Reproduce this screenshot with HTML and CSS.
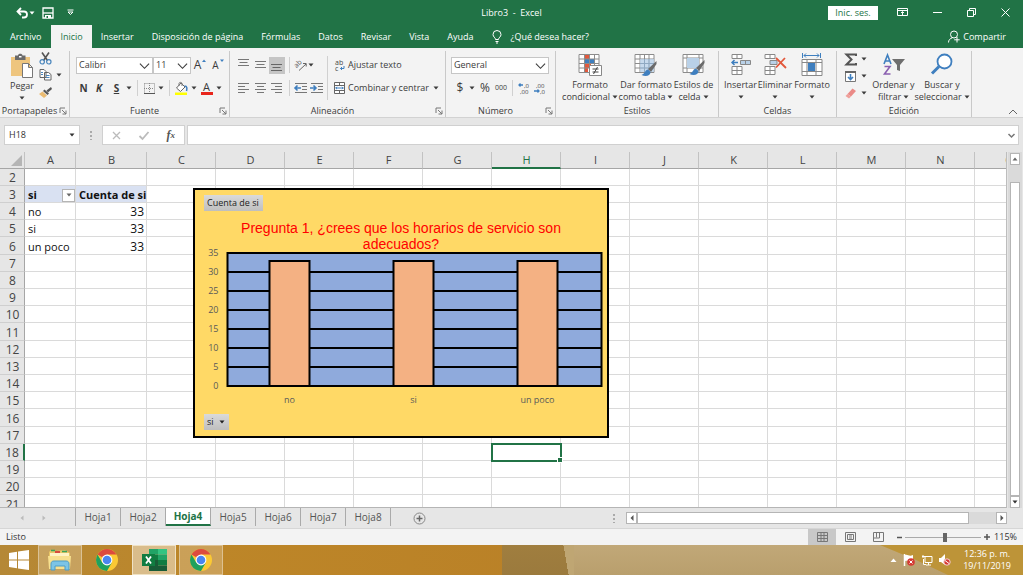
FILE: index.html
```html
<!DOCTYPE html>
<html lang="es">
<head>
<meta charset="utf-8">
<title>Libro3 - Excel</title>
<link rel="stylesheet" href="styles.css">
</head>
<body>
<svg class="defs" aria-hidden="true">
  <symbol id="caret" viewBox="0 0 6 4"><path d="M.5.500h5L3 3.500z" fill="currentColor"/></symbol>
  <symbol id="chev" viewBox="0 0 12 8"><path d="M1 1.500l5 5 5-5" fill="none" stroke="currentColor" stroke-width="1.200"/></symbol>
  <symbol id="launch" viewBox="0 0 8 8"><path d="M1 6V1h5M3 3l4 4M7 3.500V7H3.500" fill="none" stroke="#777"/></symbol>
  <symbol id="table" viewBox="0 0 22 22"><path d="M1 1.500h19v18H1z" fill="#fff"/><path d="M1 1.500h19v18H1zM1 6h19M1 10.500h19M1 15h19M6 1.500v18M10.500 1.500v18M15 1.500v18" fill="none" stroke="#8c8c8c"/></symbol>
  <symbol id="brush" viewBox="0 0 16 16"><path d="M15.500 0L7 8l3 3 5.500-8z" fill="#6b6b6b"/><path d="M7 8.500c-3 0-2.500 4-6.500 5.500 4 2 9 1 9-3z" fill="#3f7fbf"/></symbol>
  <symbol id="chrome" viewBox="0 0 24 24"><circle cx="12" cy="12" r="11" fill="#fbc934"/><path d="M12 12L2.500 6.500A11 11 0 0 1 21.500 6.500H12z" fill="#dd4b3e"/><path d="M2.500 6.500A11 11 0 0 0 12 23l4.700-8.300L12 12 7.300 14.700z" fill="#1fa15d"/><circle cx="12" cy="12" r="5.400" fill="#fff"/><circle cx="12" cy="12" r="4.300" fill="#4a86f0"/></symbol>
</svg>

<header class="top">
  <div class="titlebar">
    <div class="quick">
      <button aria-label="Deshacer"><svg width="13" height="12" viewBox="0 0 13 12"><path d="M5 1L1.500 4.500 5 8M2 4.500h6c4 0 4 6 0 6H6" fill="none" stroke="#fff" stroke-width="1.800"/></svg></button>
      <svg width="6" height="4"><use href="#caret"/></svg>
      <button class="save" aria-label="Guardar"><svg width="12" height="12" viewBox="0 0 12 12"><path d="M1 1h10v10H1z" fill="none" stroke="#fff" stroke-width="1.300"/><path d="M1 6h10" stroke="#fff" stroke-width="1.300"/><path d="M3 8h6v3H3z" fill="#fff"/><path d="M4.500 9h1.500v2H4.500z" fill="#217346"/></svg></button>
      <button aria-label="Personalizar"><svg width="7" height="7" viewBox="0 0 7 7"><path d="M.5 1h6M1 3l2.500 2.500L6 3z" fill="none" stroke="#fff"/></svg></button>
    </div>
    <h1>Libro3&nbsp; -&nbsp; Excel</h1>
    <div class="window-tools">
      <button class="signin">Inic. ses.</button>
      <button aria-label="Opciones de cinta"><svg width="11" height="9" viewBox="0 0 11 9"><path d="M.5.5h10v7H.5zM.5 2.500h10M5.500 7V4M4 5l1.500-1.500L7 5" fill="none" stroke="#fff"/></svg></button>
      <button aria-label="Minimizar"><svg width="9" height="9" viewBox="0 0 9 9"><path d="M0 4.500h9" stroke="#fff"/></svg></button>
      <button aria-label="Restaurar"><svg width="9" height="9" viewBox="0 0 9 9"><path d="M.5 2.500h6v6h-6zM2.500 2V.500h6v6H7" fill="none" stroke="#fff"/></svg></button>
      <button aria-label="Cerrar"><svg width="9" height="9" viewBox="0 0 9 9"><path d="M.5.500l8 8M8.500.500l-8 8" stroke="#fff"/></svg></button>
    </div>
  </div>
  <nav class="tabs">
    <button class="file">Archivo</button>
    <button class="on">Inicio</button>
    <button>Insertar</button>
    <button>Disposición de página</button>
    <button>Fórmulas</button>
    <button>Datos</button>
    <button>Revisar</button>
    <button>Vista</button>
    <button>Ayuda</button>
    <button class="tell"><svg width="10" height="14" viewBox="0 0 10 14"><path d="M3.500 9.500C3.500 7.500 1 7 1 4.500a4 4 0 0 1 8 0C9 7 6.500 7.500 6.500 9.500zM3.500 11.500h3M4 13h2" fill="none" stroke="#fff"/></svg>¿Qué desea hacer?</button>
    <button class="share"><svg width="12" height="13" viewBox="0 0 12 13"><circle cx="6" cy="4.500" r="3.500" fill="none" stroke="#fff"/><path d="M.5 12.500c0-2.500 1.500-4 4-4.800M9 7v5.500M6.200 9.800h5.500" fill="none" stroke="#fff"/></svg>Compartir</button>
  </nav>
</header>

<section class="ribbon" aria-label="Cinta de opciones">
  <div class="group clip">
    <div class="body">
      <button class="big"><svg width="24" height="25" viewBox="0 0 24 25"><path d="M1 4h19v19H1z" fill="#eec57e"/><path d="M5 2.500h3C8 0 12.500 0 12.500 2.500h3V7H5z" fill="#6a6a6a"/><path d="M9 3h2.500v1.500H9z" fill="#fff"/><path d="M12.500 10.500h6l4 4v10h-10zM18.500 10.500v4h4" fill="#fff" stroke="#777"/></svg><span>Pegar</span><svg width="6" height="4"><use href="#caret"/></svg></button>
      <div class="clip-side">
        <button aria-label="Cortar"><svg width="13" height="13" viewBox="0 0 13 13"><path d="M3 .5l5.500 8M10 .500L4.500 8.500" stroke="#555" stroke-width="1.600"/><circle cx="3.200" cy="9.800" r="2.200" fill="none" stroke="#4a86bd" stroke-width="1.200"/><circle cx="9.800" cy="9.800" r="2.200" fill="none" stroke="#4a86bd" stroke-width="1.200"/></svg></button>
        <button aria-label="Copiar"><svg width="13" height="12" viewBox="0 0 13 12"><path d="M1 .5h4l2 2v6H1zM5.500 3.500h4l2.500 2V11H5.500z" fill="#fff" stroke="#666"/><path d="M2 3.500h2M2 5.500h2M7 6.500h3.500M7 8.500h3.500" stroke="#4a86bd"/></svg><svg width="6" height="4"><use href="#caret"/></svg></button>
        <button aria-label="Copiar formato"><svg width="13" height="11" viewBox="0 0 13 11"><path d="M12 0L7.500 3.500 9 5.500 13 2z" fill="#555"/><path d="M5.500 2.500l4.500 4-1.500 1.500-4.500-4z" fill="#555"/><path d="M3.500 4.500l4.500 4L5 11 0 7z" fill="#eabb72"/></svg></button>
      </div>
    </div>
    <footer><span>Portapapeles</span><svg width="8" height="8"><use href="#launch"/></svg></footer>
  </div>

  <div class="group font">
    <div class="body rows">
      <div class="r-font1">
        <span class="sel"><select aria-label="Fuente"><option>Calibri</option></select><svg width="11" height="8"><use href="#chev"/></svg></span>
        <span class="sel"><select aria-label="Tamaño"><option>11</option></select><svg width="11" height="8"><use href="#chev"/></svg></span>
        <button class="aa" aria-label="Aumentar tamaño">A<svg width="4" height="4" viewBox="0 0 4 4"><path d="M0 3l2-2.500L4 3z" fill="#3f7fbf"/></svg></button>
        <button class="aa small" aria-label="Disminuir tamaño">A<svg width="4" height="4" viewBox="0 0 4 4"><path d="M0 .5h4L2 3z" fill="#3f7fbf"/></svg></button>
      </div>
      <div class="r-font2">
        <button><b>N</b></button><button><b><i>K</i></b></button><button><b><u>S</u></b></button><svg width="6" height="4"><use href="#caret"/></svg>
        <i class="sep"></i>
        <button aria-label="Bordes"><svg width="11" height="11" viewBox="0 0 11 11"><path d="M.5.500h10v10M.5.500v10M5.500 0v10M0 5.500h10" fill="none" stroke="#888" stroke-dasharray="1 1"/><path d="M0 10.500h11" stroke="#555"/></svg></button><svg width="6" height="4"><use href="#caret"/></svg>
        <i class="sep"></i>
        <button aria-label="Relleno"><svg width="13" height="13" viewBox="0 0 13 13"><path d="M6 1L1.500 6l4 3.500L10 5z" fill="#fff" stroke="#666"/><path d="M4 4V1.500C4 0 7 0 7 1.500V4" fill="none" stroke="#777"/><path d="M9.500 4c3 0 2.500 3 2 5" fill="none" stroke="#3f7fbf" stroke-width="1.500"/><path d="M0 10.500h12V13H0z" fill="#ff0"/></svg></button><svg width="6" height="4"><use href="#caret"/></svg>
        <button aria-label="Color de fuente" class="fontcolor">A</button><svg width="6" height="4"><use href="#caret"/></svg>
      </div>
    </div>
    <footer><span>Fuente</span><svg width="8" height="8"><use href="#launch"/></svg></footer>
  </div>

  <div class="group align">
    <div class="body">
      <div class="rows left">
        <div class="r-al">
          <button aria-label="Alinear arriba"><svg width="12" height="12" viewBox="0 0 12 12"><path d="M0 .5h11M1.500 3.500h8M0 6.500h11" stroke="#777"/></svg></button>
          <button aria-label="Alinear en medio"><svg width="12" height="12" viewBox="0 0 12 12"><path d="M0 2.500h11M1.500 5.500h8M0 8.500h11" stroke="#777"/></svg></button>
          <button class="pressed" aria-label="Alinear abajo"><svg width="12" height="12" viewBox="0 0 12 12"><path d="M0 5.500h11M1.500 8.500h8M0 11.500h11" stroke="#666"/></svg></button>
          <i class="sep"></i>
          <button aria-label="Orientación"><svg width="13" height="12" viewBox="0 0 13 12"><path d="M5 11.500L12 5M9 4.500h3.200v3" fill="none" stroke="#666"/><text x="4" y="7" text-anchor="middle" transform="rotate(-45 4 5)" class="svg-ab">ab</text></svg></button>
          <svg class="wide" width="6" height="4"><use href="#caret"/></svg>
        </div>
        <div class="r-al">
          <button aria-label="Izquierda"><svg width="12" height="12" viewBox="0 0 12 12"><path d="M0 1.500h11M0 4.500h7M0 7.500h11M0 10.500h7" stroke="#777"/></svg></button>
          <button aria-label="Centro"><svg width="12" height="12" viewBox="0 0 12 12"><path d="M0 1.500h11M2 4.500h7M0 7.500h11M2 10.500h7" stroke="#777"/></svg></button>
          <button aria-label="Derecha"><svg width="12" height="12" viewBox="0 0 12 12"><path d="M0 1.500h11M4 4.500h7M0 7.500h11M4 10.500h7" stroke="#777"/></svg></button>
          <i class="sep"></i>
          <button aria-label="Disminuir sangría"><svg width="13" height="12" viewBox="0 0 13 12"><path d="M1 1.500h12M8 4.500h5M8 7.500h5M1 10.500h12" stroke="#777"/><path d="M7 6H1M3.500 3.500L1 6l2.500 2.500" fill="none" stroke="#3f7fbf" stroke-width="1.600"/></svg></button>
          <i></i>
          <button aria-label="Aumentar sangría"><svg width="13" height="12" viewBox="0 0 13 12"><path d="M1 1.500h12M8 4.500h5M8 7.500h5M1 10.500h12" stroke="#777"/><path d="M0 6h6M3.500 3.500L6 6 3.500 8.500" fill="none" stroke="#3f7fbf" stroke-width="1.600"/></svg></button>
        </div>
      </div>
      <i class="sep tall"></i>
      <div class="rows right">
        <div><button class="txt"><svg width="12" height="13" viewBox="0 0 12 13"><text x="1" y="6" class="svg-abc">ab</text><text x="1" y="12" class="svg-abc">c</text><path d="M10 7v2.500H6.500M8 8L6.500 9.500 8 11" fill="none" stroke="#3f7fbf"/></svg>Ajustar texto</button></div>
        <div><button class="txt"><svg width="12" height="12" viewBox="0 0 12 12"><path d="M.5.500h10v11H.500zM.5 3.500h10M.5 8.500h10M5.500 0v3M5.500 9v3" fill="#fff" stroke="#666"/><path d="M1.500 6h8M3 4.800L1.800 6 3 7.200M8 4.800L9.200 6 8 7.200" fill="none" stroke="#3f7fbf"/></svg>Combinar y centrar</button><svg width="6" height="4"><use href="#caret"/></svg></div>
      </div>
    </div>
    <footer><span>Alineación</span><svg width="8" height="8"><use href="#launch"/></svg></footer>
  </div>

  <div class="group num">
    <div class="body rows">
      <div><span class="sel full"><select aria-label="Formato de número"><option>General</option></select><svg width="11" height="8"><use href="#chev"/></svg></span></div>
      <div class="r-num">
        <button class="money">$</button><svg width="6" height="4"><use href="#caret"/></svg><button class="money">%</button><button class="zeros">000</button>
        <i class="sep"></i>
        <button aria-label="Aumentar decimales"><svg width="13" height="13" viewBox="0 0 13 13"><path d="M5 3H1M2.500 1.500L1 3l1.500 1.500" fill="none" stroke="#3f7fbf" stroke-width="1.300"/><text x="6" y="6" class="svg-dec">,0</text><text x="2" y="12" class="svg-dec">,00</text></svg></button>
        <button aria-label="Disminuir decimales"><svg width="13" height="13" viewBox="0 0 13 13"><path d="M0 9h5M3.500 7.500L5 9l-1.500 1.500" fill="none" stroke="#3f7fbf" stroke-width="1.300"/><text x="2" y="6" class="svg-dec">,00</text><text x="6" y="12" class="svg-dec">,0</text></svg></button>
      </div>
    </div>
    <footer><span>Número</span><svg width="8" height="8"><use href="#launch"/></svg></footer>
  </div>

  <div class="group styles">
    <div class="body">
      <button class="big"><svg width="24" height="24" viewBox="0 0 24 24"><path d="M1 1.500h20v18H1z" fill="#fff"/><path d="M7 1.500h4v4.500H7zM7 10.500h6V15H7zM7 15h3v4.500H7z" fill="#e2583c"/><path d="M7 6h9v4.500H7z" fill="#3f7fbf"/><path d="M1 1.500h20v18H1zM1 6h20M1 10.500h20M1 15h20M6.500 1.500v18M11.500 1.500v18M16.500 1.500v18" fill="none" stroke="#8c8c8c"/><path d="M11.500 12.500h12v10h-12z" fill="#fff" stroke="#888"/><path d="M14.500 16h6M14.500 19h6M19.500 14l-4 7" stroke="#444"/></svg><span>Formato</span><span>condicional<svg width="6" height="4"><use href="#caret"/></svg></span></button>
      <button class="big"><svg width="24" height="24" viewBox="0 0 24 24"><use href="#table" width="22" height="22"/><path d="M6 6h14v13H6z" fill="#b9d1e8" opacity=".8"/><path d="M6 10.500h14M6 15h14M10.500 6v13M15 6v13" stroke="#8fa9c2"/><use href="#brush" x="7" y="8" width="16" height="16"/></svg><span>Dar formato</span><span>como tabla<svg width="6" height="4"><use href="#caret"/></svg></span></button>
      <button class="big"><svg width="24" height="24" viewBox="0 0 24 24"><path d="M1 1.500h20v18H1zM1 5h20M1 15h20M5 1.500v18M17 1.500v18" fill="#fff" stroke="#8c8c8c"/><path d="M5 5h12v10H5z" fill="#b9d1e8"/><use href="#brush" x="7" y="7" width="16" height="16"/></svg><span>Estilos de</span><span>celda<svg width="6" height="4"><use href="#caret"/></svg></span></button>
    </div>
    <footer><span>Estilos</span></footer>
  </div>

  <div class="group cells">
    <div class="body">
      <button class="big"><svg width="24" height="24" viewBox="0 0 24 24"><path d="M3 1.500h10v4H3zM8 1.500v4M3 13.500h10v8H3zM8 13.500v8M3 17.500h10" fill="#fff" stroke="#888"/><path d="M11.500 7.500h10v4h-10zM16.500 7.500v4" fill="#b9d1e8" stroke="#888"/><path d="M9 9.500H3M5.500 7L3 9.500 5.500 12" fill="none" stroke="#3f7fbf" stroke-width="1.500"/></svg><span>Insertar</span><svg width="6" height="4"><use href="#caret"/></svg></button>
      <button class="big"><svg width="24" height="24" viewBox="0 0 24 24"><path d="M2 1.500h10v4H2zM7 1.500v4M2 13.500h10v8H2zM7 13.500v8M2 17.500h10" fill="#fff" stroke="#888"/><path d="M7 7.500h7v4H7z" fill="#b9d1e8" stroke="#888"/><path d="M13 5l10 10M22 5L13 14.500" stroke="#e2583c" stroke-width="1.800"/></svg><span>Eliminar</span><svg width="6" height="4"><use href="#caret"/></svg></button>
      <button class="big"><svg width="24" height="24" viewBox="0 0 24 24"><path d="M2.500 0v5M20.500 0v5M4 2.500h15M6 .5l-2 2 2 2M17 .5l2 2-2 2" fill="none" stroke="#3f7fbf"/><path d="M2 6.500h20v16H2zM2 9.500h20M2 18.500h20M7 6.500v16M16 6.500v16" fill="#fff" stroke="#888"/><path d="M8 10h7v8H8z" fill="#3f7fbf"/></svg><span>Formato</span><svg width="6" height="4"><use href="#caret"/></svg></button>
    </div>
    <footer><span>Celdas</span></footer>
  </div>

  <div class="group edit">
    <div class="body">
      <div class="edit-side">
        <button aria-label="Autosuma"><svg width="12" height="13" viewBox="0 0 12 13"><path d="M11 3V1.500H1.500l5 5-5 5H11V10" fill="none" stroke="#555" stroke-width="2"/></svg><svg width="6" height="4"><use href="#caret"/></svg></button>
        <button aria-label="Rellenar"><svg width="12" height="13" viewBox="0 0 12 13"><path d="M.5 1.500h10v10H.5z" fill="#fff" stroke="#777"/><path d="M0 2h11" stroke="#666" stroke-width="2"/><path d="M5.500 4v5.500M3 7l2.500 2.500L8 7" fill="none" stroke="#3f7fbf" stroke-width="1.600"/></svg><svg width="6" height="4"><use href="#caret"/></svg></button>
        <button aria-label="Borrar"><svg width="12" height="11" viewBox="0 0 12 11"><path d="M7.500.5L11 3 6 8.500 2.500 6z" fill="#ea8a87"/><path d="M2.500 6L6 8.500 4 10.500 .5 8z" fill="#ef9f9a"/></svg><svg width="6" height="4"><use href="#caret"/></svg></button>
      </div>
      <button class="big"><svg width="24" height="24" viewBox="0 0 24 24"><path d="M2 11l3.500-9L9 11M3.200 8h4.600" fill="none" stroke="#3f7fbf" stroke-width="1.600"/><path d="M2.500 13.500H8l-5.500 7.500h6" fill="none" stroke="#8a5fb0" stroke-width="1.600"/><path d="M10 6h13l-5 6v6l-3-1v-5z" fill="#6e6e6e"/></svg><span>Ordenar y</span><span>filtrar<svg width="6" height="4"><use href="#caret"/></svg></span></button>
      <button class="big"><svg width="24" height="24" viewBox="0 0 24 24"><circle cx="14.500" cy="8.500" r="7" fill="#fff" stroke="#3f7fbf" stroke-width="1.800"/><path d="M9 13.500l-7 7" stroke="#3f7fbf" stroke-width="3"/></svg><span>Buscar y</span><span>seleccionar<svg width="6" height="4"><use href="#caret"/></svg></span></button>
    </div>
    <footer><span>Edición</span></footer>
  </div>
  <button class="collapse" aria-label="Contraer"><svg width="10" height="6" viewBox="0 0 10 6"><path d="M1 5l4-4 4 4" fill="none" stroke="#666"/></svg></button>
</section>

<section class="formula">
  <div class="namebox"><input aria-label="Cuadro de nombres" value="H18"><svg width="6" height="4"><use href="#caret"/></svg></div>
  <i class="dots"></i>
  <div class="fx">
    <button aria-label="Cancelar"><svg width="9" height="9" viewBox="0 0 9 9"><path d="M1 1l7 7M8 1L1 8" stroke="#bbb" stroke-width="1.300"/></svg></button>
    <button aria-label="Introducir"><svg width="10" height="9" viewBox="0 0 10 9"><path d="M.5 5L3.500 8l6-7" fill="none" stroke="#bbb" stroke-width="1.800"/></svg></button>
    <button class="fn">f<small>x</small></button>
  </div>
  <div class="entry"><input aria-label="Barra de fórmulas"><svg width="7" height="5" viewBox="0 0 7 5"><path d="M.5 1l3 3 3-3" fill="none" stroke="#777" stroke-width="1.500"/></svg></div>
</section>

<main class="sheet">
  <div class="grid">
    <table id="cells"></table>
    <section class="chart">
      <button class="field">Cuenta de si</button>
      <h2>Pregunta 1, ¿crees que los horarios de servicio son adecuados?</h2>
      <svg class="plot" viewBox="0 0 411 158" role="img" aria-label="Gráfico de columnas" id="plot"></svg>
      <button class="field">si <svg width="6" height="4"><use href="#caret"/></svg></button>
    </section>
  </div>
  <div class="vscroll"><button aria-label="Subir"><svg width="6" height="4" viewBox="0 0 6 4"><path d="M3 .5L5.500 3.500H.5z" fill="#666"/></svg></button><div class="thumb"></div><button aria-label="Bajar"><svg width="6" height="4"><use href="#caret"/></svg></button></div>
</main>

<div class="sheetbar">
  <div class="nav"><button aria-label="Anterior"><svg width="4" height="6" viewBox="0 0 4 6"><path d="M3.500.500v5L.5 3z" fill="#bbb"/></svg></button><button aria-label="Siguiente"><svg width="4" height="6" viewBox="0 0 4 6"><path d="M.5.500v5L3.500 3z" fill="#bbb"/></svg></button></div>
  <div class="sheets"><button>Hoja1</button><button>Hoja2</button><button class="on">Hoja4</button><button>Hoja5</button><button>Hoja6</button><button>Hoja7</button><button>Hoja8</button></div>
  <button class="add" aria-label="Hoja nueva"><svg width="13" height="13" viewBox="0 0 13 13"><circle cx="6.500" cy="6.500" r="5.500" fill="none" stroke="#888"/><path d="M6.500 3.500v6M3.500 6.500h6" stroke="#666" stroke-width="1.500"/></svg></button>
  <i class="dots"></i>
  <div class="hscroll"><button aria-label="Izquierda"><svg width="4" height="6" viewBox="0 0 4 6"><path d="M3.500 0v6L.5 3z" fill="#555"/></svg></button><div class="thumb"></div><button aria-label="Derecha"><svg width="4" height="6" viewBox="0 0 4 6"><path d="M.5 0v6L3.500 3z" fill="#555"/></svg></button></div>
</div>

<div class="status">
  <span class="ready">Listo</span>
  <div class="views">
    <button class="on" aria-label="Normal"><svg width="11" height="10" viewBox="0 0 11 10"><path d="M.5.500h10v9H.500zM.5 3.500h10M.5 6.500h10M4 0v9M7 0v9" fill="none" stroke="#777"/></svg></button>
    <button aria-label="Diseño de página"><svg width="11" height="10" viewBox="0 0 11 10"><path d="M.5.500h10v9H.500zM2.500 2.500h6v5h-6zM4 4h3M4 6h3" fill="none" stroke="#777"/></svg></button>
    <button aria-label="Saltos de página"><svg width="11" height="10" viewBox="0 0 11 10"><path d="M.5.500h10v9H.500zM.5 6h6V.5M3.500 0v5.500" fill="none" stroke="#777"/></svg></button>
  </div>
  <button aria-label="Alejar"><svg width="5" height="7" viewBox="0 0 5 7"><path d="M0 3.500h5" stroke="#555" stroke-width="1.500"/></svg></button>
  <input type="range" aria-label="Zoom" min="0" max="100" value="53">
  <button aria-label="Acercar"><svg width="6" height="6" viewBox="0 0 6 6"><path d="M3 0v6M0 3h6" stroke="#555" stroke-width="1.500"/></svg></button>
  <span class="pct">115%</span>
</div>

<div class="taskbar">
  <button class="start" aria-label="Inicio"><svg width="20" height="20" viewBox="0 0 20 20"><path d="M0 3l8-1.200V9.500H0zM9 1.600L20 0v9.500H9zM0 10.500h8v7.700L0 17zM9 10.500h11V20L9 18.400z" fill="#fff"/></svg></button>
  <button class="task open" aria-label="Explorador"><svg width="26" height="24" viewBox="0 0 26 24"><path d="M2 4l2-2 5 1 9-1 5 3v15H2z" fill="#e9c766"/><path d="M4 2.500h4M15 3.500h5" stroke="#3aa35b" stroke-width="1.500"/><path d="M8 4h5" stroke="#d64b3d" stroke-width="2"/><path d="M3 5h19v5H3z" fill="#fff3c4"/><path d="M1 8h23l-1 13H2z" fill="#f8e08e"/><path d="M4 22v-6c0-2 1-3 3-3h12c2 0 3 1 3 3v6h-4v-4H8v4z" fill="#7cc4e6" stroke="#4d9cc6"/></svg></button>
  <button class="task" aria-label="Chrome"><svg width="24" height="24"><use href="#chrome"/></svg></button>
  <button class="task open active" aria-label="Excel"><svg width="25" height="22" viewBox="0 0 25 22"><path d="M7 0h9v5.500H7z" fill="#21a366"/><path d="M16 0h9v5.500h-9z" fill="#33c481"/><path d="M7 5.500h9V11H7z" fill="#107c41"/><path d="M16 5.500h9V11h-9z" fill="#21a366"/><path d="M7 11h9v11H7z" fill="#185c37"/><path d="M16 11h9v5.500h-9z" fill="#107c41"/><path d="M16 16.500h9V22h-9z" fill="#185c37"/><path d="M0 5h13v12H0z" fill="#107c41"/><path d="M4 7.500l5 7M9 7.500l-5 7" stroke="#fff" stroke-width="1.800"/></svg></button>
  <button class="task open" aria-label="Chrome"><svg width="24" height="24"><use href="#chrome"/></svg></button>
  <div class="tray">
    <svg width="7" height="5" viewBox="0 0 7 5"><path d="M3.500.5L6.500 4H.5z" fill="#fff"/></svg>
    <svg width="12" height="12" viewBox="0 0 12 12"><path d="M1.500 0v12" stroke="#fff" stroke-width="1.500"/><path d="M2 1c3-1 4 2 8 0v6c-4 1-5-1-8 0z" fill="#fff"/><circle cx="8" cy="8" r="3.800" fill="#d63a34"/><path d="M6.500 6.500l3 3M9.500 6.500l-3 3" stroke="#fff"/></svg>
    <svg width="12" height="12" viewBox="0 0 12 12"><path d="M4 2.500h7v6H4zM5 11h5M7.500 8.500V11M2 1v3M1 2.500h3M2.500 5v5.500H5" fill="none" stroke="#fff"/></svg>
    <svg width="12" height="12" viewBox="0 0 12 12"><path d="M0 4h2l4-4v11L2 8H0z" fill="#fff"/><circle cx="8" cy="8" r="3.200" fill="#d63a34" stroke="#f3d4d0"/><path d="M6 6.500l4 3" stroke="#fff"/></svg>
    <div class="clock"><span>12:36 p. m.</span><span>19/11/2019</span></div>
  </div>
</div>
<script src="script.js"></script>
</body>
</html>
```

FILE: styles.css
```css
* { box-sizing: border-box; }
body {
  margin: 0; height: 100vh; display: flex; flex-direction: column; overflow: hidden;
  font: 9px/12px "Open Sans", "Noto Sans", sans-serif; color: #333; background: #e6e6e6;
}
button, input, select { font: inherit; color: inherit; border: 0; background: none; padding: 0; margin: 0; }
button { display: flex; align-items: center; justify-content: center; white-space: nowrap; }
svg { flex: none; display: block; overflow: visible; }
.defs { position: absolute; width: 0; height: 0; }
h1, h2 { margin: 0; font-weight: 400; font-size: 9px; }

.top { background: #217346; color: #fff; }
.titlebar { display: grid; grid-template-columns: 1fr auto 1fr; align-items: center; height: 25px; }
.quick { display: flex; align-items: center; padding-left: 16px; }
.save { margin: 0 13px 0 7px; }
.window-tools { display: flex; justify-content: flex-end; align-items: center; gap: 25px; padding-right: 13px; }
.signin { background: #fff; color: #217346; width: 50px; height: 14px; margin-right: -6px; }
.tabs { display: flex; height: 23px; }
.tabs button { padding: 0 9px; }
.tabs .file { padding: 0 10px; }
.tabs .on { background: #f3f3f3; color: #217346; }
.tabs .tell { gap: 9px; }
.tabs .share { margin-left: auto; gap: 3px; padding-right: 17px; }

.ribbon { display: flex; height: 70px; background: #f3f3f3; border-bottom: 1px solid #d2d2d2; }
.group { display: flex; flex-direction: column; flex: none; border-right: 1px solid #c9c9c9; margin-top: 3px; color: #3b3b3b; }
.body { display: flex; flex: none; height: 54px; }
.group footer { display: flex; align-items: center; height: 12px; }
.group footer span { flex: 1; text-align: center; }
.group footer svg { margin-right: 2px; }
.clip { width: 70px; } .font { width: 160px; } .align { width: 216px; } .num { width: 110px; }
.styles { width: 163px; } .cells { width: 118px; } .edit { width: 135px; }
.big { flex-direction: column; justify-content: flex-start; padding-top: 2px; }
.big > svg:first-child { margin-bottom: 2px; }
.big span { display: flex; align-items: center; gap: 2px; }
.big > svg:last-child { margin-top: 4px; }
.clip .big { padding-left: 10px; }
.clip-side { display: grid; grid-template-rows: 14px 20px 14px; padding-left: 5px; }
.clip-side button { justify-content: flex-start; gap: 4px; }
.rows { display: grid; grid-template-rows: 24px 22px; padding: 2px 6px 0; align-content: start; }
.rows > div { display: flex; align-items: center; }
.sel { position: relative; display: block; height: 17px; background: #fff; border: 1px solid #c6c6c6; }
.sel select { appearance: none; width: 100%; height: 15px; padding-left: 2px; display: block; }
.sel svg { position: absolute; right: 2px; top: 4px; pointer-events: none; }
.full { width: 98px; }
.rows > .r-font1 { display: grid; grid-template-columns: 77px 38px 18px 18px; }
.aa { font-size: 12px; gap: 1px; align-items: flex-start; }
.small { font-size: 10px; }
.rows > .r-font2 { display: grid; grid-template-columns: 15px 16px 19px 6px 11px 12px 12px 5px 19px 6px 19px 6px; justify-items: center; font-size: 10px; }
.fontcolor { border-bottom: 3px solid #e8251b; width: 12px; height: 13px; font-size: 11px; line-height: 10px; }
.sep { width: 1px; height: 16px; background: #d0d0d0; justify-self: center; }
.tall { height: 44px; margin: 5px 3px 0 4px; }
.left { padding-right: 0; }
.rows > .r-al { display: grid; grid-template-columns: 16px 17px 16px 9px 13px 3px 13px; justify-items: center; }
.r-al .wide { grid-column: span 2; justify-self: start; margin-left: 1px; }
.pressed { background: #c5c5c5; width: 16px; height: 17px; }
.right { padding-left: 3px; padding-right: 0; }
.txt { gap: 2px; margin-right: 4px; }
.svg-ab { font-size: 7px; fill: #555; }
.svg-abc { font-size: 7px; fill: #444; }
.svg-dec { font-size: 6px; fill: #444; }
.num .rows { padding-left: 5px; }
.rows > .r-num { display: grid; grid-template-columns: 18px 6px 20px 12px 10px 14px 18px; justify-items: center; }
.money { font-size: 12px; }
.zeros { font-size: 7px; }
.styles .body { display: grid; grid-template-columns: 60px 52px 43px; padding-left: 4px; }
.cells .body { display: grid; grid-template-columns: 35px 34px 40px; padding-left: 4px; }
.edit .body { display: grid; grid-template-columns: 27px 43px 54px; padding-left: 8px; }
.edit-side { display: grid; grid-template-rows: 16px 18px 16px; }
.edit-side button { gap: 4px; justify-content: flex-start; }
.collapse { margin: auto 5px 2px auto; }

.formula { display: flex; align-items: center; height: 34px; padding: 0 4px; }
.namebox, .fx, .entry { display: flex; align-items: center; height: 20px; background: #fff; border: 1px solid #d0d0d0; }
.namebox { width: 76px; padding: 0 4px; }
.namebox input { width: 100%; min-width: 0; }
.dots { width: 2px; height: 9px; margin: 0 10px; background: repeating-linear-gradient(#aaa 0 2px, transparent 2px 4px); }
.fx { width: 83px; justify-content: space-around; }
.fn { font: italic bold 12px "Liberation Serif", serif; color: #555; }
.fn small { font-size: 9px; }
.entry { flex: 1; margin-left: 2px; padding-right: 3px; }
.entry input { flex: 1; }

.sheet { flex: 1; min-height: 0; display: flex; }
.grid { position: relative; flex: 1; overflow: hidden; background: #fff; border-bottom: 1px solid #b5b5b5; border-right: 1px solid #bdbdbd; }
table { table-layout: fixed; border-collapse: separate; border-spacing: 0; width: 1044px; font-size: 11px; line-height: 14px; color: #111; }
tr { height: 17px; }
tr:nth-child(5n) { height: 18px; }
th, td { padding: 2px 2px 0 3px; border-right: 1px solid #dadada; border-bottom: 1px solid #dadada; white-space: nowrap; }
thead th { background: #e6e6e6; border-bottom-color: #a6a6a6; border-right-color: #c2c2c2; font-weight: 400; padding-top: 0; color: #444; }
tbody th { background: #e6e6e6; border-right-color: #a6a6a6; border-bottom-color: #cfcfcf; font-weight: 400; font-size: 12px; color: #444; }
thead .cur { border-bottom: 2px solid #217346; color: #217346; }
tbody .cur { border-right: 2px solid #217346; }
td.n { text-align: right; font-size: 12px; }
td.head { background: #d9e1f2; font-weight: 700; padding-right: 0; }
td.head div { display: flex; justify-content: space-between; align-items: center; }
.corner svg { margin-left: auto; }
.drop { width: 13px; height: 13px; background: #fff; border: 1px solid #b5b5b5; color: #666; }
.pick { outline: 2px solid #217346; outline-offset: -1px; position: relative; }
.pick::after { content: ""; position: absolute; right: -3px; bottom: -3px; width: 4px; height: 4px; background: #217346; border: 1px solid #fff; box-sizing: content-box; }
.chart { position: absolute; left: 193px; top: 36px; width: 416px; height: 250px; background: #ffd966; border: 2px solid #000; padding: 5px 0 0; display: flex; flex-direction: column; align-items: flex-start; }
.chart h2 { font: 14px/16px "Liberation Sans", Arial, sans-serif; color: #f00; text-align: center; width: 330px; margin: 9px auto 0; }
.field { background: linear-gradient(#dadada, #bfbfbf); height: 16px; margin-left: 9px; padding: 0 4px 0 3px; gap: 5px; color: #222; }
.plot { width: 100%; height: 158px; margin: 0 0 4px; }
.plot text { font-size: 9px; fill: #595959; }
.vscroll { width: 16px; padding: 1px 2px 0; display: flex; flex-direction: column; background: #dadada; border: solid #e6e6e6; border-width: 0 1px; }
.vscroll button { height: 12px; background: #fff; border: 1px solid #b5b5b5; }
.vscroll .thumb { flex: 1; margin-top: 17px; background: #fff; border: 1px solid #b5b5b5; }

.sheetbar { display: flex; align-items: center; height: 21px; color: #555; border-bottom: 1px solid #d6d6d6; }
.nav { display: flex; gap: 18px; width: 75px; padding-left: 20px; }
.sheets { display: flex; height: 18px; align-self: flex-start; border-left: 1px solid #aaa; }
.sheets button { width: 45px; border-right: 1px solid #aaa; font-size: 10px; }
.sheets .on { background: #fff; color: #217346; font-weight: 700; border-bottom: 2px solid #217346; }
.add { margin-left: 22px; }
.sheetbar .dots { margin-left: auto; margin-right: 11px; }
.hscroll { display: flex; width: 381px; height: 12px; margin-right: 16px; background: #dadada; }
.hscroll button { width: 11px; background: #fff; border: 1px solid #b5b5b5; }
.hscroll .thumb { flex: 1; margin-right: 27px; background: #fff; border: 1px solid #b5b5b5; }

.status { display: flex; align-items: center; height: 16px; background: #f3f3f3; padding: 0 6px; }
.ready { flex: 1; }
.views { display: flex; align-self: stretch; margin-right: 5px; }
.views button { width: 28px; }
.views .on { background: #c8c8c8; }
.status input { appearance: none; width: 76px; height: 10px; margin: 0 3px; background: linear-gradient(#aaa, #aaa) center / 100% 1px no-repeat; }
.status input::-webkit-slider-thumb { appearance: none; width: 4px; height: 9px; background: #666; }
.pct { margin-left: 4px; }

.taskbar {
  position: relative; display: flex; height: 30px; color: #fff;
  background:
    linear-gradient(80deg, transparent 50%, #bfa673 50%) 558px 0 / 16px 100% no-repeat,
    linear-gradient(#c1a878, #b99f6d) 574px 0 / 100% 100% no-repeat,
    linear-gradient(#a07e3f, #9b7a3d) 502px 0 / 72px 100% no-repeat,
    linear-gradient(90deg, #b58836, #bd8628 20%, #b98027 60%, #b17126);
}
.taskbar::before {
  content: ""; position: absolute; inset: 0 0 0 auto; width: 143px;
  background: linear-gradient(204deg, #bd9438 70%, #bd9020 85%);
  clip-path: polygon(0 0, 100% 0, 100% 100%, 68px 100%, 36px 50%);
}
.start { width: 38px; }
.task { width: 44px; margin-right: 3px; border: 1px solid transparent; }
.task.open { background: rgba(255, 255, 255, .22); border-color: rgba(255, 255, 255, .35); }
.task.open.active { background: rgba(255, 255, 255, .45); border-color: #f0e2c4; }
.tray { position: relative; display: flex; align-items: center; gap: 6px; margin-left: auto; padding-right: 12px; }
.clock { display: flex; flex-direction: column; align-items: center; margin-left: 6px; }
```

FILE: script.js
```js
const letters = "ABCDEFGHIJKLMNO".split("");
const widths = [25, 51, 71].concat(Array(13).fill(69));
const data = {
  B3: "Cuenta de si", A4: "no", A5: "si", A6: "un poco", B4: "33", B5: "33", B6: "33"
};
const caret = '<svg width="6" height="4"><use href="#caret"/></svg>';

function cell(id) {
  if (id === "A3") return `<td class="head"><div>si<button class="drop" aria-label="Filtrar">${caret}</button></div></td>`;
  const cls = id === "B3" ? "head" : id === "H18" ? "pick" : /^B/.test(id) && data[id] ? "n" : "";
  return `<td${cls ? ` class="${cls}"` : ""}>${data[id] || ""}</td>`;
}

let html = "<colgroup>" + widths.map(w => `<col style="width:${w}px">`).join("") + "</colgroup>";
html += '<thead><tr><th class="corner"><svg width="11" height="11" viewBox="0 0 11 11"><path d="M11 0v11H0z" fill="#b5b5b5"/></svg></th>';
html += letters.map(l => `<th${l === "H" ? ' class="cur"' : ""}>${l}</th>`).join("") + "</tr></thead><tbody>";
for (let r = 2; r <= 21; r++) {
  html += `<tr><th${r === 18 ? ' class="cur"' : ""}>${r}</th>` + letters.map(l => cell(l + r)).join("") + "</tr>";
}
document.getElementById("cells").innerHTML = html + "</tbody>";

const bottom = 134, step = 19, left = 32, width = 374;
let plot = `<rect x="${left}" y="1" width="${width}" height="133" fill="#8faadc" stroke="#000" stroke-width="2"/>`;
for (let i = 0; i <= 7; i++) {
  const y = bottom - i * step;
  if (i) plot += `<path d="M${left} ${y}h${width}" stroke="#000" stroke-width="2"/>`;
  plot += `<text x="23" y="${y + 3}" text-anchor="end">${i * 5}</text>`;
}
["no", "si", "un poco"].forEach((name, i) => {
  const x = 94 + i * 124;
  const h = 33 / 5 * step;
  plot += `<rect x="${x - 20}" y="${bottom - Math.round(h)}" width="40" height="${Math.round(h)}" fill="#f4b183" stroke="#000" stroke-width="2"/>`;
  plot += `<text x="${x}" y="151" text-anchor="middle">${name}</text>`;
});
document.getElementById("plot").innerHTML = plot;
```
